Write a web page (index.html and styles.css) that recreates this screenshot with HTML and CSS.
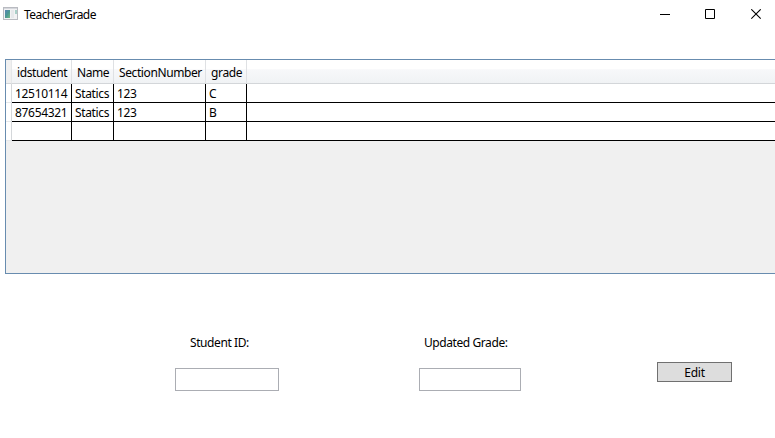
FILE: index.html
```html
<!DOCTYPE html>
<html lang="en">
<head>
<meta charset="utf-8">
<title>TeacherGrade</title>
<link rel="stylesheet" href="styles.css">
</head>
<body>
<header class="titlebar">
  <svg class="app-icon" width="16" height="16" viewBox="0 0 16 16">
    <defs><linearGradient id="pane" x1="0" y1="0" x2="1" y2="1"><stop offset="0" stop-color="#5b83b5"/><stop offset=".5" stop-color="#4a9794"/><stop offset="1" stop-color="#74b984"/></linearGradient></defs>
    <path fill="#b9bbc1" d="M0 1h15v13H0z"/><path fill="#f2f2f4" d="M1 2h13v11H1z"/>
    <path fill="#d5d7dc" d="M1 2h13v1H1z"/>
    <path fill="url(#pane)" d="M2 4h5v8H2z"/><path fill="#e6e8eb" d="M8 4h3v8H8z"/><path fill="#a9cfc8" d="M12 4h2v4h-2z"/>
  </svg>
  <h1 class="title">TeacherGrade</h1>
  <div class="controls">
    <svg width="11" height="11" viewBox="0 0 11 11"><path d="M0 5.5h10" stroke="#000"/></svg>
    <svg width="11" height="11" viewBox="0 0 11 11"><path d="M.5 .5h9v9h-9z" fill="none" stroke="#000"/></svg>
    <svg width="11" height="11" viewBox="0 0 11 11"><path d="M.3 .3l9.4 9.4M9.7 .3L.3 9.7" stroke="#000" stroke-width="1.1"/></svg>
  </div>
</header>
<main>
  <section class="datagrid">
    <div class="row head"><span class="rowhead"></span><span class="cell t-id">idstudent</span><span class="cell t-name">Name</span><span class="cell t-section">SectionNumber</span><span class="cell t-grade">grade</span><span class="rest"></span></div>
    <div class="row"><span class="rowhead"></span><span class="cell num">12510114</span><span class="cell stat">Statics</span><span class="cell num">123</span><span class="cell">C</span><span class="rest"></span></div>
    <div class="row"><span class="rowhead"></span><span class="cell num">87654321</span><span class="cell stat">Statics</span><span class="cell num">123</span><span class="cell">B</span><span class="rest"></span></div>
    <div class="row"><span class="rowhead"></span><span class="cell"></span><span class="cell"></span><span class="cell"></span><span class="cell"></span><span class="rest"></span></div>
  </section>
  <form class="editor">
    <div class="field student"><label for="sid">Student ID:</label><input id="sid" type="text"></div>
    <div class="field updated"><label for="grade">Updated Grade:</label><input id="grade" type="text"></div>
    <button type="button">Edit</button>
  </form>
</main>
</body>
</html>
```
FILE: styles.css
```css
* { box-sizing: border-box; }
body {
  margin: 0;
  width: 775px;
  height: 438px;
  overflow: hidden;
  background: #fff;
  color: #000;
  font: 12px/16px "Noto Sans", "Open Sans", sans-serif;
}
.titlebar {
  display: flex;
  align-items: flex-start;
  height: 59px;
  padding-left: 3px;
}
.app-icon { margin-top: 6px; }
.title {
  margin: 7px 0 0 5px;
  font-size: 12px;
  font-weight: 400;
  line-height: 16px;
  letter-spacing: -0.56px;
}
.controls {
  display: flex;
  gap: 35px;
  margin: 9px 13px 0 auto;
}
.controls svg { display: block; }
.controls svg:first-child { margin-right: -1px; }
.datagrid {
  height: 215px;
  margin-left: 5px;
  border: 1px solid #688caf;
  border-right: 0;
  background: #f0f0f0;
}
.row {
  display: grid;
  grid-template-rows: 100%;
  grid-template-columns: 6px 60px 42px 92px 41px 1fr;
  height: 19px;
}
.row > * {
  min-height: 0;
  border-bottom: 1px solid #000;
  background: #fff;
}
.cell {
  padding-left: 3px;
  border-right: 1px solid #000;
  line-height: 19px;
  white-space: nowrap;
}
.row .rowhead {
  border-right: 1px solid #d4d7da;
  border-bottom-color: #e6e8ea;
}
.head { height: 24px; background: linear-gradient(#fff 0, #fff 38%, #f7f8fa 40%, #f0f2f4 100%); }
.head > * { background: none; border-bottom-color: #d3d6d9; }
.head .rowhead { border-right-color: #e5e7e9; border-bottom-color: #d3d6d9; background: #f0f0f0; }
.head .cell {
  padding-left: 5px;
  border-right-color: #dfe1e4;
  line-height: 25px;
}
.num { letter-spacing: -0.32px; }
.stat { letter-spacing: -0.36px; }
.t-id { letter-spacing: -0.42px; }
.t-name { letter-spacing: -0.4px; }
.t-section { letter-spacing: -0.4px; }
.t-grade { letter-spacing: -0.35px; }
.editor {
  display: flex;
  align-items: flex-start;
  padding: 61px 0 0 175px;
}
.field { display: flex; flex-direction: column; gap: 17px; }
.field label { letter-spacing: -0.42px; white-space: nowrap; }
.field input {
  height: 23px;
  margin: 0;
  padding: 0 3px;
  border: 1px solid #abadb3;
  background: #fff;
  font: inherit;
}
.student { width: 104px; }
.student label { padding-left: 15px; }
.updated { width: 102px; margin-left: 140px; }
.updated label { padding-left: 5px; }
button {
  width: 75px;
  height: 20px;
  margin: 27px 0 0 136px;
  padding: 2px 0 0;
  border: 1px solid #707070;
  border-radius: 0;
  background: #ddd;
  color: #000;
  font: inherit;
  line-height: 16px;
  letter-spacing: -0.2px;
}
```
